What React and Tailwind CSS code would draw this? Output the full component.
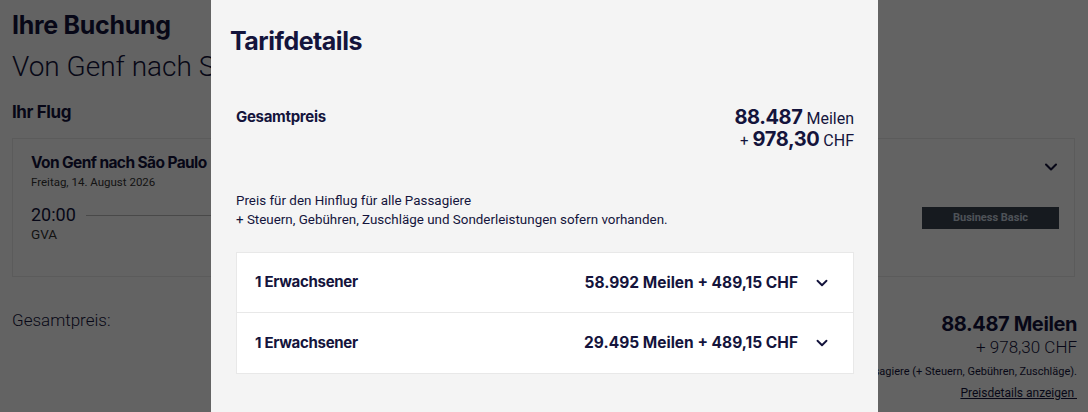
import { FiChevronDown } from 'react-icons/fi';

const navy = 'text-[#14143c]';
const bold = "font-['Inter',sans-serif] font-bold";

function PassengerRow({ label, miles, chf, last }) {
  return (
    <div className={`flex items-center h-[60px] pl-[18px] pr-[22px] ${last ? '' : 'border-b border-[#e8e8e8]'}`}>
      <span className={`${bold} text-[15px] tracking-[-0.3px]`}>{label}</span>
      <span className={`ml-auto ${bold} text-[15.5px] tracking-[0px]`}>
        {miles} Meilen + {chf} CHF
      </span>
      <FiChevronDown className="ml-[15px] w-[18px] h-[18px] stroke-[2.5]" />
    </div>
  );
}

export default function App() {
  return (
    <div className="relative w-[1088px] h-[412px] overflow-hidden bg-white font-['Roboto',sans-serif]">
      {/* booking page behind the dialog */}
      <div className={`flex flex-col px-3 ${navy}`}>
        <h1 className={`mt-[9px] text-[25px] leading-[32px] ${bold} tracking-[-0.3px]`}>Ihre Buchung</h1>
        <h2 className="mt-[8px] text-[28px] leading-[36px] font-light">Von Genf nach São Paulo</h2>
        <h3 className={`mt-[15px] text-[17px] leading-[24px] ${bold} tracking-[-0.4px]`}>Ihr Flug</h3>

        <div className="mt-[14px] w-[1063px] h-[139px] border border-[#eaeaea] pl-[18px] pr-[19px] pt-[14px] flex">
          <div className="flex flex-col flex-1">
            <span className={`${bold} text-[15.5px] leading-[20px] tracking-[-0.6px]`}>Von Genf nach São Paulo</span>
            <span className="mt-[1px] text-[11.5px] leading-[16px] text-[#333]">Freitag, 14. August 2026</span>
            <div className="mt-[15px] flex items-start">
              <div className="flex flex-col">
                <span className="text-[18px] leading-[20px]">20:00</span>
                <span className="text-[13.5px] leading-[18px] text-[#333]">GVA</span>
              </div>
              <div className="mt-[10px] ml-[10px] w-[300px] h-px bg-[#bbb]" />
            </div>
          </div>
          <div className="flex flex-col items-end">
            <FiChevronDown className="mt-[4px] mr-[-6px] w-[20px] h-[20px] stroke-[2.5]" />
            <span className="mt-[30px] mr-[-4px] w-[137px] h-[22px] bg-[#3a4350] text-[#c8d4e0] text-[11px] font-bold flex items-center justify-center">
              Business Basic
            </span>
          </div>
        </div>

        <div className="mt-[31px] flex justify-between">
          <span className="text-[17px] font-light">Gesamtpreis:</span>
          <div className="pt-[4px] flex flex-col items-end mr-[-1px]">
            <span className={`text-[20px] leading-[24px] ${bold} tracking-[-0.4px]`}>88.487 Meilen</span>
            <span className="text-[17px] leading-[22px] font-light">+ 978,30 CHF</span>
            <span className="mt-[6px] text-[11px] leading-[16px]">
              Preis für den Hinflug für alle Passagiere (+ Steuern, Gebühren, Zuschläge).
            </span>
            <span className="mt-[5px] text-[12px] leading-[16px] underline">Preisdetails anzeigen&nbsp;</span>
          </div>
        </div>
      </div>

      {/* dimmed backdrop */}
      <div className="absolute inset-0 bg-black/[0.61]" />

      {/* fare details dialog */}
      <div className={`absolute left-[211px] top-0 w-[667px] h-[440px] bg-[#f4f4f4] ${navy}`}>
        <div className="flex flex-col px-[19px]">
          <h2 className={`mt-[25px] text-[25px] leading-[32px] ${bold} tracking-[-0.5px]`}>Tarifdetails</h2>

          <div className="mt-[50px] pl-[6px] pr-[5px] flex justify-between">
            <span className={`text-[15px] leading-[20px] ${bold} tracking-[-0.3px]`}>Gesamtpreis</span>
            <div className="flex flex-col items-end">
              <span className="leading-[21px]">
                <span className={`text-[20px] ${bold} tracking-[-0.4px]`}>88.487</span>{' '}
                <span className="text-[16px]">Meilen</span>
              </span>
              <span className="leading-[21px]">
                <span className="text-[15px]">+</span>{' '}
                <span className={`text-[20px] ${bold} tracking-[-0.4px]`}>978,30</span>{' '}
                <span className="text-[16px]">CHF</span>
              </span>
            </div>
          </div>

          <div className="mt-[39px] pl-[6px] text-[13.4px] leading-[19px]">
            <p>Preis für den Hinflug für alle Passagiere</p>
            <p>+ Steuern, Gebühren, Zuschläge und Sonderleistungen sofern vorhanden.</p>
          </div>

          <div className="mt-[23px] ml-[6px] mr-[5px] bg-white border border-[#e8e8e8]">
            <PassengerRow label="1 Erwachsener" miles="58.992" chf="489,15" />
            <PassengerRow label="1 Erwachsener" miles="29.495" chf="489,15" last />
          </div>
        </div>
      </div>
    </div>
  );
}
